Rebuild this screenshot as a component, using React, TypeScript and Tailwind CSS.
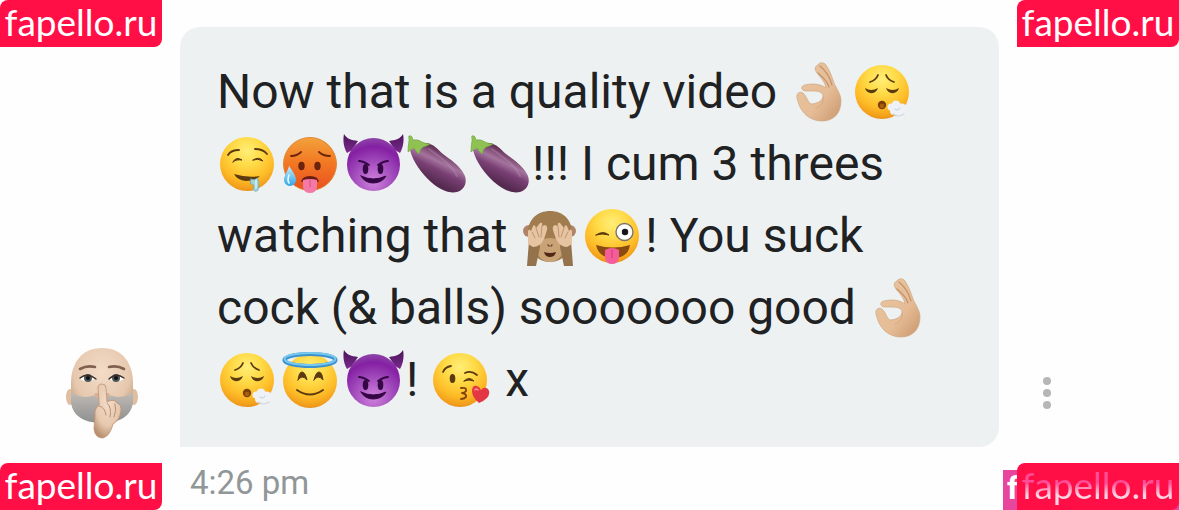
import type { ReactNode } from "react";

const INK = "#5b3a10";

// --- EMOJI ---
function Emoji({ label, children }: { label: string; children: ReactNode }) {
  return (
    <svg
      role="img"
      aria-label={label}
      viewBox="0 0 63 64"
      className="inline-block h-16 w-[63px] align-[-16px]"
      fill="none"
      strokeLinecap="round"
      strokeLinejoin="round"
    >
      {children}
    </svg>
  );
}

function Gradients() {
  return (
    <svg className="absolute h-0 w-0" aria-hidden="true">
      <defs>
        <radialGradient id="face" cx="50%" cy="26%" r="76%">
          <stop offset="0" stopColor="#ffee78" />
          <stop offset="0.35" stopColor="#ffdb48" />
          <stop offset="0.7" stopColor="#fdbc27" />
          <stop offset="0.92" stopColor="#f29d1b" />
          <stop offset="1" stopColor="#df8a1c" />
        </radialGradient>
        <linearGradient id="hot" x1="0" y1="0" x2="0" y2="1">
          <stop offset="0" stopColor="#f3a23c" />
          <stop offset="0.45" stopColor="#f27a24" />
          <stop offset="1" stopColor="#e9501f" />
        </linearGradient>
        <radialGradient id="devil" cx="50%" cy="82%" r="82%">
          <stop offset="0" stopColor="#cf82dc" />
          <stop offset="0.45" stopColor="#a34dbd" />
          <stop offset="0.8" stopColor="#8420a3" />
          <stop offset="1" stopColor="#8e45a8" />
        </radialGradient>
        <linearGradient id="horn" x1="0" y1="0" x2="0" y2="1">
          <stop offset="0" stopColor="#4a1458" />
          <stop offset="1" stopColor="#7c2a8e" />
        </linearGradient>
        <linearGradient id="aubergine" x1="0.65" y1="0.2" x2="0.35" y2="0.75">
          <stop offset="0" stopColor="#633057" />
          <stop offset="0.35" stopColor="#a5749e" />
          <stop offset="0.6" stopColor="#794074" />
          <stop offset="1" stopColor="#552a50" />
        </linearGradient>
        <linearGradient id="hand" x1="0" y1="0" x2="1" y2="1">
          <stop offset="0" stopColor="#e9c6a0" />
          <stop offset="0.6" stopColor="#e5bc96" />
          <stop offset="1" stopColor="#c9966c" />
        </linearGradient>
        <linearGradient id="drop" x1="0" y1="0" x2="0" y2="1">
          <stop offset="0" stopColor="#c8edf9" />
          <stop offset="1" stopColor="#2da6e6" />
        </linearGradient>
        <radialGradient id="skin" cx="50%" cy="32%" r="70%">
          <stop offset="0" stopColor="#f3dcc8" />
          <stop offset="0.65" stopColor="#e6c8ae" />
          <stop offset="1" stopColor="#b88f70" />
        </radialGradient>
        <linearGradient id="beard" x1="0" y1="0" x2="0" y2="1">
          <stop offset="0" stopColor="#c0bcb7" />
          <stop offset="1" stopColor="#8e8f8f" />
        </linearGradient>
      </defs>
    </svg>
  );
}

function OkHand() {
  return (
    <Emoji label="ok hand">
      <path
        d="M29 5C30 2 35 2 37 5C41 11 43 17 45 23C47 28 52 34 52 41C52 54 44 61 33 61C21 61 11 53 8 38C7 33 11 31 14 33C18 36 18 42 22 44C27 44 34 41 34 36C34 32 29 31 24 31H17C12 31 11 26 16 25C24 23 32 24 37 28C36 22 32 18 28 13C25 9 26 6 29 5Z"
        fill="url(#hand)"
        stroke="#cfa680"
        strokeWidth="0.7"
      />
      <path d="M29 13C33 17 38 20 40 27" stroke="#c4946c" strokeWidth="1.2" />
      <path d="M31 6C36 10 41 18 43 25" stroke="#c08f68" strokeWidth="1.1" />
      <path d="M34 37C36 41 32 46 27 48" stroke="#d5aa83" strokeWidth="1" />
    </Emoji>
  );
}

function Exhaling() {
  return (
    <Emoji label="face exhaling">
      <circle cx="30" cy="32" r="27" fill="url(#face)" />
      <g stroke={INK} strokeWidth="1.8">
        <path d="M18 22Q24 20 26 15" />
        <path d="M34 15Q36 20 42 22" />
      </g>
      <path d="M13 28Q19 32 26 28Q24 34 18 33Q14 32 13 28Z" fill={INK} />
      <path d="M34 28Q41 32 47 28Q46 32 42 33Q36 34 34 28Z" fill={INK} />
      <circle cx="30" cy="45" r="4.2" fill="#7b3f08" />
      <circle cx="30" cy="46" r="2.3" fill="#a95f0b" />
      <g fill="#eef2f7">
        <circle cx="39" cy="47" r="3.5" />
        <circle cx="44" cy="45" r="4.5" />
        <circle cx="50" cy="48" r="4.5" />
        <circle cx="48" cy="52" r="4.5" />
        <circle cx="42" cy="51" r="4" />
      </g>
      <path d="M41 54Q46 58 52 54M43 49Q46 51 48 48" stroke="#ccd6e2" strokeWidth="1.2" />
    </Emoji>
  );
}

function Drooling() {
  return (
    <Emoji label="drooling face">
      <circle cx="30" cy="32" r="27" fill="url(#face)" />
      <path d="M11 23Q14 18 22 18M38 17Q46 17 50 22" stroke={INK} strokeWidth="1.8" />
      <path d="M16 30Q19 24 25 28Q19 27 16 30Z" fill={INK} stroke={INK} />
      <path d="M36 28Q42 24 46 29Q41 26 36 28Z" fill={INK} stroke={INK} />
      <path d="M17 42Q30 46 43 44Q38 49 29 49Q20 48 17 42Z" fill={INK} />
      <path d="M34 47Q38 49 40 46Q43 50 41 58Q38 61 36 57Q39 52 34 52Z" fill="#a3d5dc" stroke="#70a9b5" strokeWidth="0.8" />
      <path d="M39 48V56" stroke="#eefcff" strokeWidth="1" />
    </Emoji>
  );
}

function HotFace() {
  return (
    <Emoji label="hot face">
      <circle cx="30" cy="32" r="26.5" fill="url(#hot)" stroke="#e08a38" strokeWidth="1" />
      <path d="M11 24Q17 24 21 20M39 20Q43 24 50 24" stroke="#6b230c" strokeWidth="1.8" />
      <ellipse cx="21.5" cy="34" rx="3.2" ry="4.2" fill="#6b230c" />
      <ellipse cx="37.5" cy="34" rx="3.2" ry="4.2" fill="#6b230c" />
      <path d="M21 50Q22 44 30 44Q38 44 39 50Q30 47 21 50Z" fill="#6b1d13" />
      <path d="M23 48Q30 46 37 48V55Q36 61 30 61Q24 61 23 55Z" fill="#f579a7" />
      <path d="M30 48V55" stroke="#d95185" strokeWidth="1" />
      <path d="M9 34C12 39 16 43 16 48A6 6 0 0 1 4 48C4 43 8 39 9 34Z" fill="url(#drop)" />
      <path d="M9 43Q7 48 9 51" stroke="#e9faff" strokeWidth="1.6" />
    </Emoji>
  );
}

function Devil() {
  return (
    <Emoji label="smiling face with horns">
      <path d="M4 21C0 14 0 7 1 2C4 7 8 8 15 9L9 18Z" fill="url(#horn)" />
      <path d="M57 21C61 14 61 7 60 2C57 7 53 8 46 9L52 18Z" fill="url(#horn)" />
      <circle cx="30.5" cy="32.5" r="26.5" fill="url(#devil)" />
      <g stroke="#350644" strokeWidth="1.8">
        <path d="M16 29Q20 29 26 33M35 33Q41 29 45 29" />
      </g>
      <ellipse cx="22.5" cy="37" rx="2.8" ry="5" fill="#350644" />
      <ellipse cx="37.5" cy="37" rx="2.8" ry="5" fill="#350644" />
      <path d="M18 44Q30 50 43 44Q39 51 30 51Q22 51 18 44Z" fill="#350644" stroke="#350644" />
    </Emoji>
  );
}

function Aubergine() {
  return (
    <Emoji label="aubergine">
      <path
        d="M4 18C7 30 16 42 25 50C33 57 43 62 51 60C59 58 62 49 58 42C53 33 45 28 37 22C31 17 28 12 20 11Z"
        fill="url(#aubergine)"
      />
      <path d="M23 17C34 25 46 33 51 44" stroke="#ba8cb4" strokeWidth="2" opacity="0.4" />
      <path
        d="M3 4Q5 3 6 5L7 8Q12 7 16 10Q20 12 24 12Q21 14 17 15Q14 17 13 22Q10 20 8 16Q5 17 2 20Q2 14 3 9Z"
        fill="#8fc153"
        stroke="#71a640"
        strokeWidth="0.7"
      />
    </Emoji>
  );
}

function Monkey() {
  return (
    <Emoji label="see-no-evil monkey">
      <circle cx="10" cy="27" r="6" fill="#b08468" />
      <circle cx="51" cy="27" r="6" fill="#b08468" />
      <path d="M9 31C8 16 18 7 31 7C44 7 54 16 53 31C52 48 44 58 31 58C18 58 10 48 9 31Z" fill="#a17c4f" />
      <path d="M19 38Q31 30 43 38L45 48Q39 58 31 58Q22 58 17 48Z" fill="#c9a376" />
      <path d="M8 62L10 37Q20 33 21 43L17 62Z" fill="#94724c" />
      <path d="M54 62L52 37Q42 33 41 43L45 62Z" fill="#94724c" />
      <path d="M9 40L9 27Q10 24 12 27L14 22Q16 20 17 24L21 19Q24 18 23 22L26 21Q29 22 28 26L25 35Q21 43 14 43Z" fill="#e6c4a1" />
      <path d="M53 40L53 27Q52 24 50 27L48 22Q46 20 45 24L41 19Q38 18 39 22L36 21Q33 22 34 26L37 35Q41 43 48 43Z" fill="#e6c4a1" />
      <path d="M13 28L16 34M17 24L20 33M23 22L22 33M49 28L46 34M45 24L42 33M39 22L40 33" stroke="#bf946e" strokeWidth="1" />
      <path d="M29 41L30 42M33 41L32 42" stroke="#65452d" strokeWidth="1.4" />
      <path d="M25 48Q31 50 37 48Q36 53 31 53Q26 53 25 48Z" fill="#522716" />
    </Emoji>
  );
}

function Winking() {
  return (
    <Emoji label="winking face with tongue">
      <circle cx="30" cy="32" r="27" fill="url(#face)" />
      <path d="M14 31Q21 26 27 31Q20 29 14 31Z" fill={INK} stroke={INK} />
      <circle cx="42.5" cy="28" r="8.5" fill="#fff" stroke="#7b7669" strokeWidth="1.4" />
      <circle cx="43" cy="28" r="3.2" fill="#171717" />
      <path d="M14 41Q31 46 48 41Q46 54 31 54Q17 54 14 41Z" fill="#8a4a10" />
      <path d="M23 46Q30 42 37 46V54Q36 60 30 60Q24 60 23 54Z" fill="#f45c9a" />
      <path d="M30 46V54" stroke="#cf3b7a" strokeWidth="1" />
    </Emoji>
  );
}

function Angel() {
  return (
    <Emoji label="smiling face with halo">
      <circle cx="30" cy="33" r="27" fill="url(#face)" />
      <ellipse cx="30" cy="12" rx="25.5" ry="6" stroke="#3c91cf" strokeWidth="4.2" />
      <ellipse cx="30" cy="11" rx="25.5" ry="6" stroke="#78c9ef" strokeWidth="2" />
      <path d="M18 32Q19 24 22 24Q25 24 27 32Q22 26 18 32Z" fill={INK} stroke={INK} />
      <path d="M34 32Q36 24 39 24Q42 24 43 32Q38 26 34 32Z" fill={INK} stroke={INK} />
      <path d="M17 42Q30 51 43 42" stroke={INK} strokeWidth="2" />
    </Emoji>
  );
}

function Kiss() {
  return (
    <Emoji label="face blowing a kiss">
      <circle cx="30" cy="32" r="27" fill="url(#face)" />
      <path d="M13 24Q15 19 21 18M35 25Q41 22 47 27" stroke={INK} strokeWidth="1.8" />
      <ellipse cx="22.5" cy="30.5" rx="2.8" ry="4.5" fill={INK} />
      <path d="M34 33Q39 28 44 33Q39 31 34 33Z" fill={INK} stroke={INK} />
      <path d="M31 40Q37 39 36 43Q35 45 32 45Q37 46 36 49Q34 51 31 51" stroke="#80420a" strokeWidth="1.8" />
      <path d="M49 55Q42 49 42 43Q42 37 47 38Q50 39 51 42Q54 38 58 41Q61 45 57 50Q54 53 49 55Z" fill="#e43744" />
      <path d="M45 42Q46 40 48 42" stroke="#ff8b8d" strokeWidth="1.5" />
    </Emoji>
  );
}

// --- AVATAR ---
function Avatar() {
  return (
    <svg role="img" aria-label="avatar" viewBox="0 0 72 92" className="h-[92px] w-[72px]" fill="none" strokeLinecap="round">
      <ellipse cx="4" cy="50" rx="4" ry="8" fill="#e0bea2" />
      <ellipse cx="68" cy="50" rx="4" ry="8" fill="#e0bea2" />
      <path d="M36 1C15 1 5 17 5 36V52C5 66 16 75 36 75C56 75 67 66 67 52V36C67 17 57 1 36 1Z" fill="url(#skin)" />
      <path d="M5 45Q15 52 25 49Q36 46 47 49Q57 52 67 45V53C67 67 56 76 36 76C16 76 5 67 5 53Z" fill="url(#beard)" />
      <path d="M14 22Q21 18 29 20M43 20Q51 18 58 22" stroke="#80604f" strokeWidth="2.6" />
      <path d="M14 32Q21 25 29 32Q22 37 14 32Z" fill="#fff" />
      <path d="M43 32Q50 25 58 32Q50 37 43 32Z" fill="#fff" />
      <circle cx="22" cy="31" r="4" fill="#4d5659" />
      <circle cx="50" cy="31" r="4" fill="#4d5659" />
      <circle cx="22" cy="31" r="2" fill="#111" />
      <circle cx="50" cy="31" r="2" fill="#111" />
      <path d="M14 31Q21 25 30 32M43 32Q50 25 58 31" stroke="#3a2e28" strokeWidth="1.3" />
      <path d="M29 46Q27 51 33 51H40Q45 50 43 46" fill="#d9b092" />
      <path
        d="M32 41Q32 37 36 37Q40 37 40 41L41 55Q48 51 51 56Q56 58 55 64Q54 73 47 77Q44 89 37 91Q29 91 28 82L29 68Q28 62 33 58Z"
        fill="url(#skin)"
        stroke="#bd9272"
        strokeWidth="0.8"
      />
      <path d="M33 59Q39 60 40 68M41 56Q46 60 44 70M49 57Q51 63 48 70" stroke="#ba8f70" strokeWidth="1" />
    </svg>
  );
}

// --- CORNER LABELS ---
function SiteTag({ className, children }: { className: string; children: ReactNode }) {
  return (
    <a
      href="#"
      className={`absolute flex h-[47px] w-[162px] items-center justify-center rounded-tl-lg rounded-br-lg bg-[#ff0f46] pb-1 font-[Lato] text-[37px] leading-10 font-normal text-white ${className}`}
    >
      {children}
    </a>
  );
}

export default function App() {
  return (
    <main className="relative min-h-screen overflow-hidden bg-[#fefefe] font-[Roboto,sans-serif]">
      <Gradients />
      <section className="flex items-end pt-[27px]">
        <div className="flex w-[180px] shrink-0 justify-center pb-2 pl-6">
          <Avatar />
        </div>

        <div className="min-w-0 flex-1 rounded-[20px] rounded-bl-none bg-[#eef1f2] px-[37px] pt-[29px] pb-[31px]">
          <p className="text-[48px] leading-[72px] whitespace-pre text-[#202123]">
            <span className="block h-[72px]">
              Now that is a quality video <OkHand />
              <Exhaling />
            </span>
            <span className="block h-[72px]">
              <Drooling />
              <HotFace />
              <Devil />
              <Aubergine />
              <Aubergine />
              !!! I cum 3 threes
            </span>
            <span className="block h-[72px]">
              watching that <Monkey />
              <Winking />! You suck
            </span>
            <span className="block h-[72px]">
              cock (&amp; balls) sooooooo good <OkHand />
            </span>
            <span className="block h-[72px]">
              <Exhaling />
              <Angel />
              <Devil />! <Kiss /> x
            </span>
          </p>
        </div>

        <div className="w-[180px] shrink-0 pb-[34px] pl-9">
          <button type="button" aria-label="Message options" className="flex w-6 flex-col items-center gap-1 py-1">
            <span className="size-2 rounded-full bg-[#b5b7b7]" />
            <span className="size-2 rounded-full bg-[#b5b7b7]" />
            <span className="size-2 rounded-full bg-[#b5b7b7]" />
          </button>
        </div>
      </section>

      <time className="block pt-4 pl-[190px] text-[33px] leading-10 text-[#919698]">4:26 pm</time>

      <SiteTag className="top-0 left-0">fapello.ru</SiteTag>
      <SiteTag className="top-0 right-0">fapello.ru</SiteTag>
      <SiteTag className="bottom-0 left-0">fapello.ru</SiteTag>

      <div className="absolute right-0 bottom-0 flex h-10 w-44 bg-[#e8459c] pl-1 text-[32px] leading-9 font-bold text-white">
        f
        <SiteTag className="right-0 bottom-0">
          <span className="bg-linear-to-b from-[#ff4d98] from-45% to-[#ffd3e4] to-75% bg-clip-text text-transparent">
            fapello.ru
          </span>
        </SiteTag>
      </div>
    </main>
  );
}
